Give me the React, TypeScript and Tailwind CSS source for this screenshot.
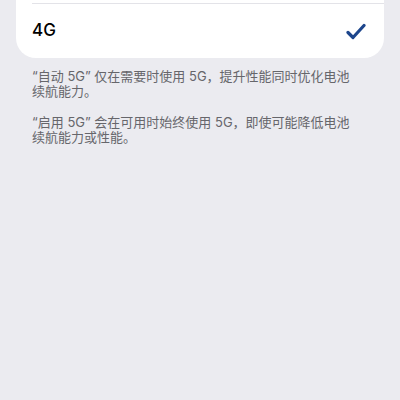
import React from 'react';

const App: React.FC = () => {
  return (
    <div
      className="min-h-[400px] w-[400px] bg-[#ebebf0] px-4"
      style={{ fontFamily: '"Inter", "Noto Sans CJK SC", sans-serif' }}
    >
      <div className="rounded-b-[20px] bg-white pt-[3px]">
        <div className="ml-4 h-px bg-[#e3e3e8]" />
        <div className="flex h-[54px] items-center justify-between pl-4 pr-[18px]">
          <span className="text-[17px] font-medium text-black">4G</span>
          <svg width="20" height="17" viewBox="0 0 20 17" fill="none">
            <path
              d="M2 9.5 L7 14.5 L18 2.5"
              stroke="#1d468c"
              strokeWidth="3.2"
              strokeLinecap="round"
              strokeLinejoin="round"
            />
          </svg>
        </div>
      </div>
      <div className="space-y-[16px] px-4 pt-[11px] text-[13px] leading-[15px] text-[#66666b]">
        <p>
          “自动 5G” 仅在需要时使用 5G，提升性能同时优化电池
          <br />
          续航能力。
        </p>
        <p>
          “启用 5G” 会在可用时始终使用 5G，即使可能降低电池
          <br />
          续航能力或性能。
        </p>
      </div>
    </div>
  );
};

export default App;
